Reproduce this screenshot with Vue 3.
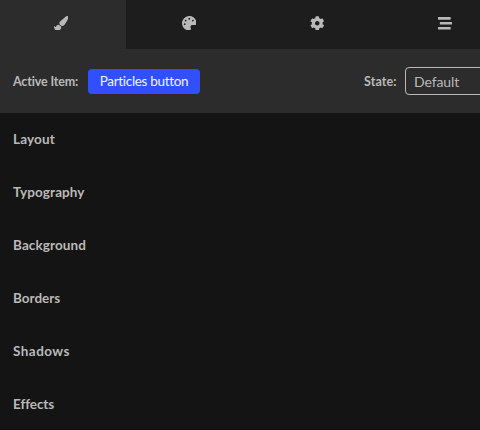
<script setup>
const tabs = [
  { name: 'brush', path: 'M167.02 309.34c-40.12 2.58-76.53 17.86-97.19 72.3-2.35 6.21-8 9.98-14.59 9.98-11.11 0-45.46-27.67-55.25-34.35C0 439.62 37.93 512 128 512c75.86 0 128-43.77 128-120.19 0-3.11-.65-6.08-.97-9.13l-88.01-73.34zM457.89 0c-15.16 0-29.37 6.71-40.21 16.45C213.27 199.05 192 203.34 192 257.09c0 13.7 3.25 26.76 8.73 38.7l63.82 53.18c7.21 1.8 14.64 3.03 22.39 3.03 62.11 0 98.11-45.47 211.16-256.46 7.38-14.35 13.9-29.85 13.9-45.99C512 20.64 486 0 457.89 0z' },
  { name: 'palette', path: 'M204.3 5C104.9 24.4 24.8 104.3 5.2 203.4c-37 187 131.7 326.4 258.8 306.7 41.2-6.4 61.4-54.6 42.5-91.7-23.1-45.4 9.9-98.4 60.9-98.4h79.7c35.8 0 64.8-29.6 64.9-65.3C511.5 97.1 368.1-26.9 204.3 5zM96 320a32 32 0 1 1 0-64 32 32 0 0 1 0 64zm32-128a32 32 0 1 1 0-64 32 32 0 0 1 0 64zm128-64a32 32 0 1 1 0-64 32 32 0 0 1 0 64zm128 64a32 32 0 1 1 0-64 32 32 0 0 1 0 64z' },
  { name: 'gear', path: 'M487.4 315.7l-42.6-24.6c4.3-23.2 4.3-47 0-70.2l42.6-24.6c4.9-2.8 7.1-8.6 5.5-14-11.1-35.6-30-67.8-54.7-94.6-3.8-4.1-10-5.1-14.8-2.3L380.8 110c-17.9-15.4-38.5-27.3-60.8-35.1V25.8c0-5.6-3.9-10.5-9.4-11.7-36.7-8.2-74.3-7.8-109.2 0-5.5 1.2-9.4 6.1-9.4 11.7V75c-22.2 7.9-42.8 19.8-60.8 35.1L88.7 85.5c-4.9-2.8-11-1.9-14.8 2.3-24.7 26.7-43.6 58.9-54.7 94.6-1.7 5.4.6 11.2 5.5 14L67.3 221c-4.3 23.2-4.3 47 0 70.2l-42.6 24.6c-4.9 2.8-7.1 8.6-5.5 14 11.1 35.6 30 67.8 54.7 94.6 3.8 4.1 10 5.1 14.8 2.3l42.6-24.6c17.9 15.4 38.5 27.3 60.8 35.1v49.2c0 5.6 3.9 10.5 9.4 11.7 36.7 8.2 74.3 7.8 109.2 0 5.5-1.2 9.4-6.1 9.4-11.7v-49.2c22.2-7.9 42.8-19.8 60.8-35.1l42.6 24.6c4.9 2.8 11 1.9 14.8-2.3 24.7-26.7 43.6-58.9 54.7-94.6 1.5-5.5-.7-11.3-5.6-14.1zM256 336c-44.1 0-80-35.9-80-80s35.9-80 80-80 80 35.9 80 80-35.9 80-80 80z' },
  { name: 'stream', path: 'M16 128h416c8.84 0 16-7.16 16-16V48c0-8.84-7.16-16-16-16H16C7.16 32 0 39.16 0 48v64c0 8.84 7.16 16 16 16zm480 80H80c-8.84 0-16 7.16-16 16v64c0 8.84 7.16 16 16 16h416c8.84 0 16-7.16 16-16v-64c0-8.84-7.16-16-16-16zm-64 176H16c-8.84 0-16 7.16-16 16v64c0 8.84 7.16 16 16 16h416c8.84 0 16-7.16 16-16v-64c0-8.84-7.16-16-16-16z' },
]
const sections = ['Layout', 'Typography', 'Background', 'Borders', 'Shadows', 'Effects']
</script>

<template>
  <div class="panel">
    <nav class="tabs">
      <div v-for="(tab, i) in tabs" :key="tab.name" class="tab" :class="{ active: i === 0 }">
        <svg class="icon" viewBox="0 0 512 512"><path :d="tab.path" /></svg>
      </div>
    </nav>
    <div class="toolbar">
      <span class="label item-label">Active Item:</span>
      <span class="chip">Particles button</span>
      <span class="label state-label">State:</span>
      <div class="select">Default</div>
    </div>
    <div class="sections">
      <div v-for="s in sections" :key="s" class="section" :class="s.toLowerCase()">{{ s }}</div>
    </div>
  </div>
</template>

<style>
body {
  background: #141414;
}
</style>

<style scoped>
.panel {
  width: 480px;
  height: 430px;
  overflow: hidden;
  box-sizing: border-box;
  background: #141414;
  border-bottom: 1px solid #100c10;
  color: #b9b9b9;
  font-family: Lato, "Open Sans", sans-serif;
  font-size: 13px;
  white-space: nowrap;
}
.tabs {
  display: grid;
  grid-template-columns: 126px 128px 128px 128px;
  height: 49px;
  background: #1d1d1d;
}
.tab {
  display: flex;
  justify-content: center;
  padding-top: 15.5px;
  padding-right: 2.5px;
}
.tab.active {
  background: #2c2c2c;
  padding-right: 4px;
}
.icon {
  width: 14.5px;
  height: 14.5px;
  fill: #b9b9b9;
}
.toolbar {
  display: flex;
  align-items: center;
  height: 64px;
  padding-left: 13px;
  box-sizing: border-box;
  background: #2c2c2c;
}
.label {
  flex: none;
  padding-top: 1px;
  font-weight: 700;
  font-size: 12.5px;
}
.item-label {
  width: 75px;
  letter-spacing: -0.15px;
}
.chip {
  flex: none;
  width: 112px;
  height: 25px;
  line-height: 25px;
  border-radius: 4px;
  background: #3050ff;
  color: #f4f4ff;
  text-align: center;
  font-size: 13.5px;
  letter-spacing: -0.32px;
}
.state-label {
  width: 41px;
  margin-left: 164px;
  letter-spacing: 0.1px;
}
.select {
  flex: none;
  width: 110px;
  height: 28px;
  line-height: 27px;
  padding-left: 8px;
  box-sizing: border-box;
  border: 1px solid #b9b9b9;
  border-radius: 4px;
  font-size: 14px;
  letter-spacing: -0.1px;
}
.section {
  height: 53px;
  line-height: 53px;
  padding-left: 13px;
  font-size: 13.5px;
  font-weight: 700;
}
.layout {
  letter-spacing: 0.15px;
}
.typography,
.background {
  letter-spacing: 0.1px;
}
.borders {
  letter-spacing: 0;
}
.shadows {
  letter-spacing: 0.45px;
}
.effects {
  letter-spacing: -0.08px;
}
</style>
